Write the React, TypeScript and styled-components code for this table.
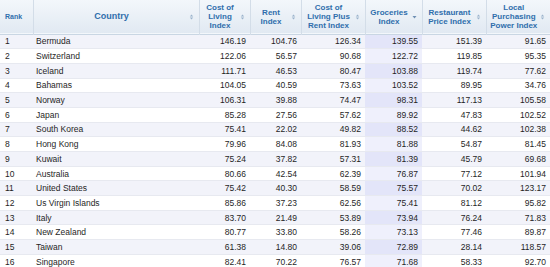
import React from "react"
import styled, { createGlobalStyle } from "styled-components"

const GlobalStyle = createGlobalStyle`
  html, body {
    margin: 0;
    padding: 0;
    background: #ffffff;
  }
  body {
    font-family: "Liberation Sans", Arial, sans-serif;
    width: 550px;
    height: 267px;
    overflow: hidden;
  }
`

type Row = [string, number, number, number, number, number, number]

const rows: Row[] = [
  ["Bermuda", 146.19, 104.76, 126.34, 139.55, 151.39, 91.65],
  ["Switzerland", 122.06, 56.57, 90.68, 122.72, 119.85, 95.35],
  ["Iceland", 111.71, 46.53, 80.47, 103.88, 119.74, 77.62],
  ["Bahamas", 104.05, 40.59, 73.63, 103.52, 89.95, 34.76],
  ["Norway", 106.31, 39.88, 74.47, 98.31, 117.13, 105.58],
  ["Japan", 85.28, 27.56, 57.62, 89.92, 47.83, 102.52],
  ["South Korea", 75.41, 22.02, 49.82, 88.52, 44.62, 102.38],
  ["Hong Kong", 79.96, 84.08, 81.93, 81.88, 54.87, 81.45],
  ["Kuwait", 75.24, 37.82, 57.31, 81.39, 45.79, 69.68],
  ["Australia", 80.66, 42.54, 62.39, 76.87, 77.12, 101.94],
  ["United States", 75.42, 40.3, 58.59, 75.57, 70.02, 123.17],
  ["Us Virgin Islands", 85.86, 37.23, 62.56, 75.41, 81.12, 95.82],
  ["Italy", 83.7, 21.49, 53.89, 73.94, 76.24, 71.83],
  ["New Zealand", 80.77, 33.8, 58.26, 73.13, 77.46, 89.87],
  ["Taiwan", 61.38, 14.8, 39.06, 72.89, 28.14, 118.57],
  ["Singapore", 82.41, 70.22, 76.57, 71.68, 58.33, 92.7],
]

const columns = [
  { label: "Cost of Living Index", width: 51 },
  { label: "Rent Index", width: 51 },
  { label: "Cost of Living Plus Rent Index", width: 64 },
  { label: "Groceries Index", width: 57, sorted: true },
  { label: "Restaurant Price Index", width: 64 },
  { label: "Local Purchasing Power Index", width: 64 },
]

const Table = styled.table`
  width: 550px;
  table-layout: fixed;
  border-collapse: collapse;
  border-spacing: 0;
`

const HeadRow = styled.tr`
  height: 34px;
  background: linear-gradient(#f3f7fb, #e1e9f2);
  border-bottom: 1px solid #c9d6e3;
`

const HeadCell = styled.th<{ $align?: "left" | "center"; $size?: number }>`
  position: relative;
  padding: 0 12px 0 3px;
  border-left: 1px solid #d3dde8;
  color: #2f6eac;
  font-weight: bold;
  font-size: ${(p) => p.$size ?? 8}px;
  line-height: 9px;
  text-align: ${(p) => p.$align ?? "center"};
  vertical-align: middle;

  &:first-child {
    border-left: none;
    padding-left: 5px;
  }
`

const SortMark = styled.svg`
  position: absolute;
  right: 5px;
  top: 50%;
  margin-top: -3px;
  width: 5px;
  height: 6px;
`

const BodyRow = styled.tr<{ $odd: boolean }>`
  height: 14.7px;
  background: ${(p) => (p.$odd ? "#f2f3fa" : "#ffffff")};
  border-top: 1px solid #e7e9f0;
`

const Cell = styled.td<{ $num?: boolean; $sorted?: boolean; $odd?: boolean }>`
  padding: 0 ${(p) => (p.$num ? "4px" : "3px")} 0 ${(p) => (p.$num ? "0" : "3px")};
  font-size: 8.5px;
  color: #1f1f1f;
  white-space: nowrap;
  text-align: ${(p) => (p.$num ? "right" : "left")};
  background: ${(p) => (p.$sorted ? (p.$odd ? "#e3e5f9" : "#eff0fc") : "transparent")};

  &:first-child {
    padding-left: 5px;
  }
`

const SortIcon = ({ sorted }: { sorted?: boolean }) =>
  sorted ? (
    <SortMark viewBox="0 0 5 6">
      <path d="M0.5 2 L4.5 2 L2.5 4.5 Z" fill="#6f8fb3" />
    </SortMark>
  ) : (
    <SortMark viewBox="0 0 5 6">
      <path d="M0.8 2.4 L4.2 2.4 L2.5 0.5 Z" fill="#9bb3cc" />
      <path d="M0.8 3.6 L4.2 3.6 L2.5 5.5 Z" fill="#9bb3cc" />
    </SortMark>
  )

const fmt = (n: number) => n.toFixed(2)

export default function App() {
  return (
    <>
      <GlobalStyle />
      <Table>
        <colgroup>
          <col style={{ width: 33 }} />
          <col style={{ width: 166 }} />
          {columns.map((c) => (
            <col key={c.label} style={{ width: c.width }} />
          ))}
        </colgroup>
        <thead>
          <HeadRow>
            <HeadCell $align="left" $size={7}>
              Rank
            </HeadCell>
            <HeadCell $size={9}>
              Country
              <SortIcon />
            </HeadCell>
            {columns.map((c) => (
              <HeadCell key={c.label}>
                {c.label}
                <SortIcon sorted={c.sorted} />
              </HeadCell>
            ))}
          </HeadRow>
        </thead>
        <tbody>
          {rows.map((r, i) => {
            const odd = i % 2 === 0
            return (
              <BodyRow key={r[0]} $odd={odd}>
                <Cell>{i + 1}</Cell>
                <Cell>{r[0]}</Cell>
                {r.slice(1).map((v, j) => (
                  <Cell key={j} $num $sorted={columns[j].sorted} $odd={odd}>
                    {fmt(v as number)}
                  </Cell>
                ))}
              </BodyRow>
            )
          })}
        </tbody>
      </Table>
    </>
  )
}
